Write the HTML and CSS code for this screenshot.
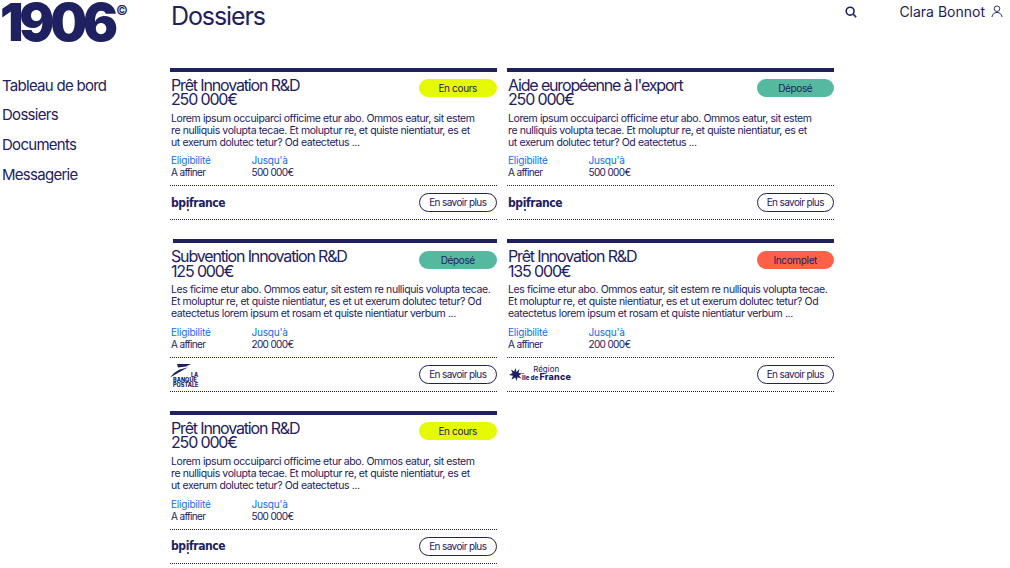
FILE: index.html
```html
<!DOCTYPE html>
<html lang="fr">
<head>
<meta charset="utf-8">
<title>Dossiers</title>
<link rel="stylesheet" href="styles.css">
</head>
<body>
<div class="page">
  <aside class="side">
    <div class="logo"><span class="logo-num">1906</span><span class="logo-c">©</span></div>
    <nav class="nav">
      <a>Tableau de bord</a>
      <a>Dossiers</a>
      <a>Documents</a>
      <a>Messagerie</a>
    </nav>
  </aside>
  <main class="main">
    <header class="top">
      <h1>Dossiers</h1>
      <div class="tools">
        <svg class="search" width="12" height="12" viewBox="0 0 14 14" fill="none" stroke="#1e2060" stroke-width="1.9"><circle cx="6" cy="6" r="4.600"/><path d="M9.300 9.300 13 13"/></svg>
        <div class="user">
          <span>Clara Bonnot</span>
          <svg class="user-icon" width="12" height="13" viewBox="0 0 13 14" fill="none" stroke="#1e2060" stroke-width="1"><circle cx="6.500" cy="4" r="3"/><path d="M1 13c.6-3.200 2.600-5 5.500-5s4.900 1.800 5.500 5"/></svg>
        </div>
      </div>
    </header>
    <section class="grid">
      <article class="card">
        <div class="head"><h2>Prêt Innovation R&amp;D<br>250 000€</h2><span class="pill lime">En cours</span></div>
        <p>Lorem ipsum occuiparci officime etur abo. Ommos eatur, sit estem<br>re nulliquis volupta tecae. Et moluptur re, et quiste nientiatur, es et<br>ut exerum dolutec tetur? Od eatectetus ...</p>
        <div class="meta"><div class="col"><b>Eligibilité</b><span>A affiner</span></div><div class="col"><b>Jusqu'à</b><span>500 000€</span></div></div>
        <div class="foot"><span class="bpi">bp<span class="bpi-i">i</span>france</span><a class="btn">En savoir plus</a></div>
      </article>
      <article class="card">
        <div class="head"><h2>Aide européenne à l'export<br>250 000€</h2><span class="pill teal">Déposé</span></div>
        <p>Lorem ipsum occuiparci officime etur abo. Ommos eatur, sit estem<br>re nulliquis volupta tecae. Et moluptur re, et quiste nientiatur, es et<br>ut exerum dolutec tetur? Od eatectetus ...</p>
        <div class="meta"><div class="col"><b>Eligibilité</b><span>A affiner</span></div><div class="col"><b>Jusqu'à</b><span>500 000€</span></div></div>
        <div class="foot"><span class="bpi">bp<span class="bpi-i">i</span>france</span><a class="btn">En savoir plus</a></div>
      </article>
      <article class="card inset">
        <div class="head"><h2>Subvention Innovation R&amp;D<br>125 000€</h2><span class="pill teal">Déposé</span></div>
        <p>Les ficime etur abo. Ommos eatur, sit estem re nulliquis volupta tecae.<br>Et moluptur re, et quiste nientiatur, es et ut exerum dolutec tetur? Od<br>eatectetus lorem ipsum et rosam et quiste nientiatur verbum ...</p>
        <div class="meta"><div class="col"><b>Eligibilité</b><span>A affiner</span></div><div class="col"><b>Jusqu'à</b><span>200 000€</span></div></div>
        <div class="foot">
          <span class="lbp">
            <svg width="21" height="14" viewBox="0 0 21 14"><path d="M7 0h14l-5 2.600-8 .9zM18 3.200 0 13.500l4-4.500 5-3.300z" fill="#1e2060"/></svg>
            <span class="lbp-la">LA</span>
            <span class="lbp-txt">BANQUE<br>POSTALE</span>
          </span>
          <a class="btn">En savoir plus</a>
        </div>
      </article>
      <article class="card">
        <div class="head"><h2>Prêt Innovation R&amp;D<br>135 000€</h2><span class="pill red">Incomplet</span></div>
        <p>Les ficime etur abo. Ommos eatur, sit estem re nulliquis volupta tecae.<br>Et moluptur re, et quiste nientiatur, es et ut exerum dolutec tetur? Od<br>eatectetus lorem ipsum et rosam et quiste nientiatur verbum ...</p>
        <div class="meta"><div class="col"><b>Eligibilité</b><span>A affiner</span></div><div class="col"><b>Jusqu'à</b><span>200 000€</span></div></div>
        <div class="foot">
          <span class="idf">
            <svg width="13" height="13" viewBox="0 0 13 13"><path d="M6.500 0l1 4 3-3-1 4 3.500.5-3 2 2.500 3-4-1.200-.8 3.700-1.500-3.500-3.700 2 1.500-3.800L0 7l3.500-2L2 1.500l3.300 2z" fill="#1e2060"/></svg>
            <span class="idf-txt"><span class="idf-r">Région</span><span class="idf-f"><i>Île</i><i>de</i>France</span></span>
          </span>
          <a class="btn">En savoir plus</a>
        </div>
      </article>
      <article class="card">
        <div class="head"><h2>Prêt Innovation R&amp;D<br>250 000€</h2><span class="pill lime">En cours</span></div>
        <p>Lorem ipsum occuiparci officime etur abo. Ommos eatur, sit estem<br>re nulliquis volupta tecae. Et moluptur re, et quiste nientiatur, es et<br>ut exerum dolutec tetur? Od eatectetus ...</p>
        <div class="meta"><div class="col"><b>Eligibilité</b><span>A affiner</span></div><div class="col"><b>Jusqu'à</b><span>500 000€</span></div></div>
        <div class="foot"><span class="bpi">bp<span class="bpi-i">i</span>france</span><a class="btn">En savoir plus</a></div>
      </article>
    </section>
  </main>
</div>
</body>
</html>
```
FILE: styles.css
```css
* { box-sizing: border-box; }
html, body { margin: 0; padding: 0; background: #fff; }
body { font-family: Inter, "Liberation Sans", sans-serif; color: #1e2060; overflow: hidden; }
.page { display: flex; width: 1010px; height: 568px; }
.side { width: 170px; flex: none; padding-left: 2px; }
.logo { display: flex; height: 46px; align-items: flex-start; margin-left: -2px; }
.logo-num { font-size: 52px; font-weight: 900; line-height: 46px; letter-spacing: -4.2px; }
.logo-c { font-size: 13px; font-weight: 500; line-height: 20px; margin-left: 2px; }
.nav { display: flex; flex-direction: column; gap: 9.800px; margin-top: 29.600px; }
.nav a { font-size: 15px; line-height: 20px; letter-spacing: -.72px; }
.main { flex: none; width: 840px; }
.top { display: flex; justify-content: space-between; height: 67.600px; }
h1 { margin: 0; font-size: 25px; font-weight: 400; line-height: 32px; letter-spacing: -1.100px; padding-left: 1px; }
.tools { display: flex; align-items: flex-start; padding-top: 3px; }
.search { margin-top: 3px; margin-right: 42px; }
.user { display: flex; gap: 6px; font-size: 14px; line-height: 18px; margin-right: 7px; }
.user-icon { margin-top: 2px; }
.grid { display: grid; grid-template-columns: 326.500px 327px; column-gap: 10.500px; width: 664px; align-content: start; }
.card { border-top: 4px solid #1e2060; height: 171.600px; }
.card.inset { border-image: linear-gradient(to right, #fff 3px, #1e2060 3px) 1; border-image-slice: 1 0 0 0; }
.head { display: flex; justify-content: space-between; align-items: flex-start; padding: 6px 0 0 1px; }
h2 { margin: 0; font-size: 16px; font-weight: 400; line-height: 14.500px; letter-spacing: -1.150px; }
.pill { width: 77.500px; height: 18px; border-radius: 9px; font-size: 10px; line-height: 18px; text-align: center; letter-spacing: -.35px; margin-top: 1.400px; }
.lime { background: #e5f900; }
.teal { background: #55b9a0; }
.red { background: #ff6048; }
p { margin: 6px 0 0; padding-left: 1px; font-size: 10.500px; line-height: 12.100px; letter-spacing: -.4px; height: 37.800px; white-space: nowrap; }
.meta { display: flex; margin-top: 4px; padding-left: 1px; font-size: 10px; line-height: 12px; }
.col { display: flex; flex-direction: column; width: 80.500px; letter-spacing: -.65px; }
.col b { font-weight: 400; color: #0b6ff0; letter-spacing: -.2px; }
.foot { display: flex; justify-content: space-between; align-items: center; height: 35px; margin-top: 7px; padding-left: 1px; border-top: 1px dotted #1e2060; border-bottom: 1px dotted #1e2060; }
.btn { width: 77.500px; height: 19px; border: 1px solid #1e2060; border-radius: 10px; font-size: 10px; line-height: 17px; text-align: center; letter-spacing: -.6px; }
.bpi { font-family: "DejaVu Sans Condensed", "DejaVu Sans", sans-serif; font-stretch: condensed; font-size: 12px; font-weight: 700; letter-spacing: -.4px; line-height: 16px; }
.bpi-i { position: relative; }
.bpi-i::after { content: ""; position: absolute; left: 1px; bottom: -1px; width: 2px; height: 2px; background: #1e2060; border-radius: 50%; }
.lbp { display: grid; grid-template-columns: 21px auto; width: 29px; font-weight: 800; margin: 3px 0 0 -1px; }
.lbp-la { font-size: 5.500px; line-height: 6px; align-self: end; }
.lbp-txt { grid-column: 1 / 3; font-size: 5.500px; line-height: 4.800px; padding-left: 3px; white-space: nowrap; }
.idf { display: flex; align-items: center; margin-left: 1px; }
.idf-txt { display: flex; flex-direction: column; align-items: flex-end; }
.idf-r { font-size: 8px; line-height: 7px; margin-right: 12px; }
.idf-f { font-size: 9px; font-weight: 800; line-height: 8px; letter-spacing: .2px; }
.idf-f i { font-style: normal; font-size: 6px; margin-right: 1px; }
```
